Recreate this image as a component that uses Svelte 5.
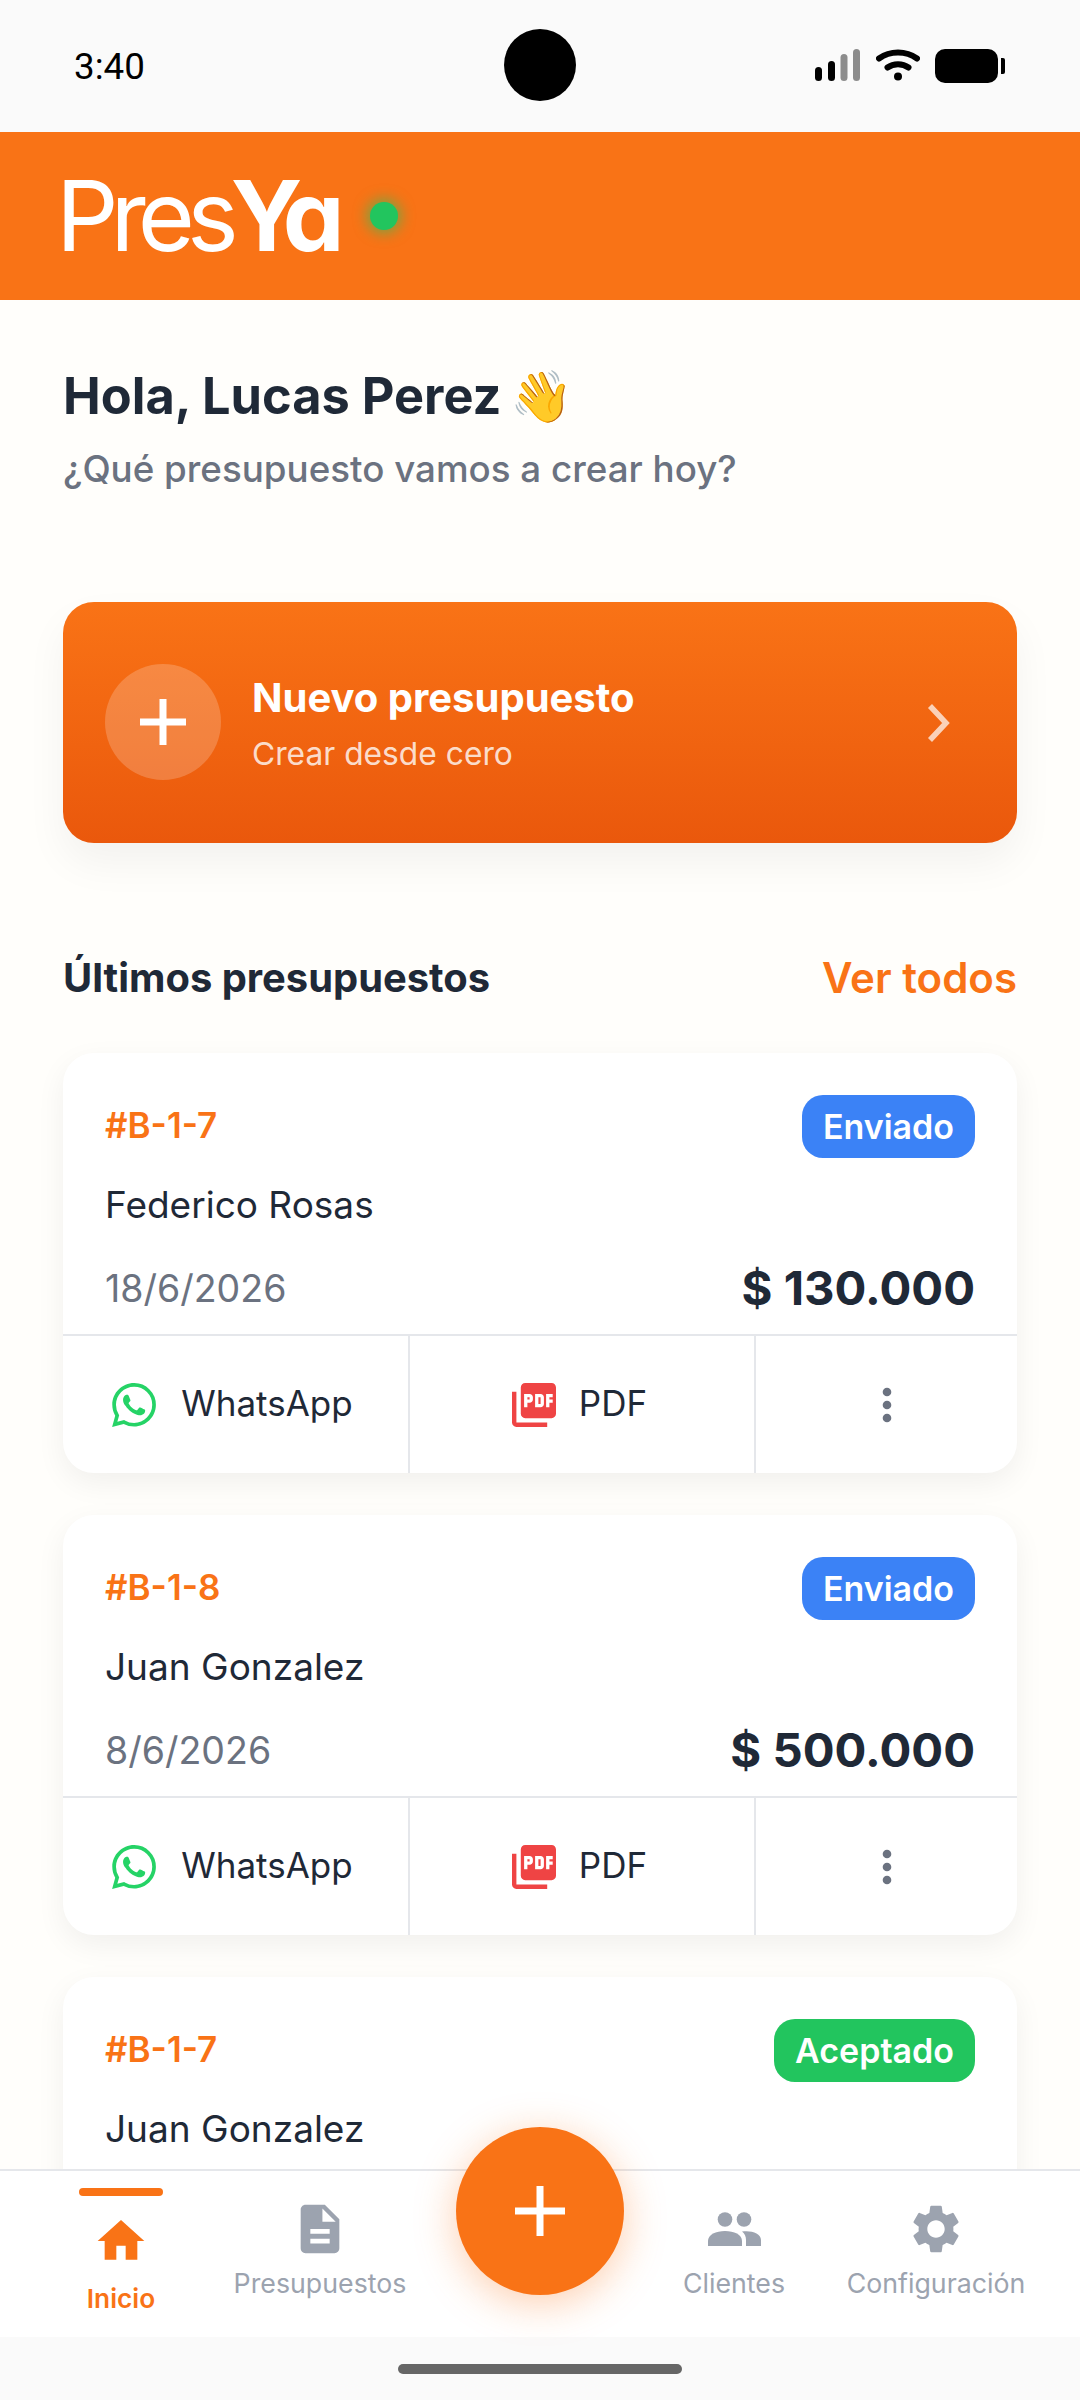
<script>
  const cards = [
    { id: '#B-1-7', status: 'Enviado', cls: 'blue', name: 'Federico Rosas', date: '18/6/2026', price: '$ 130.000' },
    { id: '#B-1-8', status: 'Enviado', cls: 'blue', name: 'Juan Gonzalez', date: '8/6/2026', price: '$ 500.000' },
    { id: '#B-1-7', status: 'Aceptado', cls: 'green', name: 'Juan Gonzalez', date: '5/6/2026', price: '$ 320.000' }
  ];
</script>

<div class="screen">
  <div class="status">
    <span class="time">3:40</span>
    <span class="camera"></span>
    <div class="sysicons">
      <svg class="signal" width="46" height="34" viewBox="0 0 46 34">
        <rect x="0" y="18" width="7" height="14" rx="3.5" fill="#000" />
        <rect x="13" y="12" width="7" height="20" rx="3.5" fill="#000" />
        <rect x="25.500" y="5" width="7" height="27" rx="3.500" fill="#8c8c8c" />
        <rect x="38" y="0" width="7" height="32" rx="3.500" fill="#8c8c8c" />
      </svg>
      <svg class="wifi" width="44" height="34" viewBox="0 0 44 34" fill="none" stroke="#000" stroke-linecap="round">
        <path d="M3 9.500C14 1.500 30 1.500 41 9.500" stroke-width="6" />
        <path d="M11.500 18.500C17.500 14 26.500 14 32.500 18.500" stroke-width="6" />
        <circle cx="22" cy="27.500" r="4" fill="#000" stroke="none" />
      </svg>
      <div class="battery"><span class="cell"></span><span class="nub"></span></div>
    </div>
  </div>

  <header class="brand">
    <div class="logo"><span class="pres">Pres</span><span class="ya">Ya</span></div>
    <span class="dot"></span>
  </header>

  <main class="content">
    <h1>Hola, Lucas Perez <span class="wave">👋</span></h1>
    <p class="sub">¿Qué presupuesto vamos a crear hoy?</p>

    <div class="cta">
      <div class="cta-circle">
        <svg width="46" height="46" viewBox="0 0 46 46"><path d="M23 0v46M0 23h46" stroke="#fff" stroke-width="7" /></svg>
      </div>
      <div class="cta-text">
        <div class="cta-title">Nuevo presupuesto</div>
        <div class="cta-sub">Crear desde cero</div>
      </div>
      <svg class="chev" width="24" height="40" viewBox="0 0 24 40" fill="none"><path d="M3 3l16 17L3 37" stroke="#fff" stroke-width="5.500" /></svg>
    </div>

    <div class="section">
      <h2>Últimos presupuestos</h2>
      <span class="all">Ver todos</span>
    </div>

    {#each cards as c}
      <article class="card">
        <div class="card-body">
          <div class="row top">
            <span class="id">{c.id}</span>
            <span class="badge {c.cls}">{c.status}</span>
          </div>
          <div class="name">{c.name}</div>
          <div class="row bottom">
            <span class="date">{c.date}</span>
            <span class="price">{c.price}</span>
          </div>
        </div>
        <div class="actions">
          <div class="action wa">
            <svg width="44" height="44" viewBox="0 0 24 24" fill="#25d366"><path d="M17.472 14.382c-.297-.149-1.758-.867-2.03-.967-.273-.099-.471-.148-.67.15-.197.297-.767.966-.94 1.164-.173.199-.347.223-.644.075-.297-.15-1.255-.463-2.39-1.475-.883-.788-1.48-1.761-1.653-2.059-.173-.297-.018-.458.13-.606.134-.133.298-.347.446-.52.149-.174.198-.298.298-.497.099-.198.05-.371-.025-.52-.075-.149-.669-1.612-.916-2.207-.242-.579-.487-.5-.669-.51-.173-.008-.371-.01-.57-.01-.198 0-.52.074-.792.372-.272.297-1.04 1.016-1.04 2.479 0 1.462 1.065 2.875 1.213 3.074.149.198 2.096 3.2 5.077 4.487.709.306 1.262.489 1.694.625.712.227 1.36.195 1.871.118.571-.085 1.758-.719 2.006-1.413.248-.694.248-1.289.173-1.413-.074-.124-.272-.198-.57-.347m-5.421 7.403h-.004a9.87 9.87 0 01-5.031-1.378l-.361-.214-3.741.982.998-3.648-.235-.374a9.86 9.86 0 01-1.51-5.26c.001-5.45 4.436-9.884 9.888-9.884 2.64 0 5.122 1.03 6.988 2.898a9.825 9.825 0 012.893 6.994c-.003 5.45-4.437 9.884-9.885 9.884m8.413-18.297A11.815 11.815 0 0012.05 0C5.495 0 .16 5.335.157 11.892c0 2.096.547 4.142 1.588 5.945L.057 24l6.305-1.654a11.882 11.882 0 005.683 1.448h.005c6.554 0 11.89-5.335 11.893-11.893a11.821 11.821 0 00-3.48-8.413z"/></svg>
            <span class="act-label">WhatsApp</span>
          </div>
          <div class="action pdf">
            <svg width="44" height="44" viewBox="2 2 20 20" fill="#ef4444"><path d="M20 2H8c-1.100 0-2 .9-2 2v12c0 1.100.9 2 2 2h12c1.100 0 2-.9 2-2V4c0-1.100-.9-2-2-2zm-8.500 7.500c0 .83-.67 1.500-1.500 1.500H9v2H7.500V7H10c.83 0 1.500.67 1.500 1.500v1zm5 2c0 .83-.67 1.500-1.500 1.500h-2.500V7H15c.83 0 1.500.67 1.500 1.500v3zm4-3H19v1h1.500V11H19v2h-1.500V7h3v1.500zM9 9.500h1v-1H9v1zM4 6H2v14c0 1.100.9 2 2 2h14v-2H4V6zm10 5.500h1v-3h-1v3z"/></svg>
            <span class="act-label">PDF</span>
          </div>
          <div class="action more">
            <svg width="10" height="36" viewBox="0 0 10 36" fill="#6b7280"><circle cx="5" cy="5" r="4.300"/><circle cx="5" cy="18" r="4.300"/><circle cx="5" cy="31" r="4.300"/></svg>
          </div>
        </div>
      </article>
    {/each}
  </main>

  <nav class="nav">
    <div class="tab active">
      <span class="bar"></span>
      <svg width="56" height="56" viewBox="0 0 24 24" fill="#f97316"><path d="M10 20v-6h4v6h5v-8h3L12 3 2 12h3v8z"/></svg>
      <span class="label">Inicio</span>
    </div>
    <div class="tab">
      <svg width="58" height="58" viewBox="0 0 24 24" fill="#9ca3af"><path d="M14 2H6c-1.100 0-1.990.9-1.990 2L4 20c0 1.100.89 2 1.990 2H18c1.100 0 2-.9 2-2V8l-6-6zm2 16H8v-2h8v2zm0-4H8v-2h8v2zm-3-5V3.500L18.500 9H13z"/></svg>
      <span class="label">Presupuestos</span>
    </div>
    <div class="gap"></div>
    <div class="tab">
      <svg class="people" width="53" height="34" viewBox="0 0 53 34" fill="#9ca3af"><circle cx="17" cy="7.500" r="7.300"/><circle cx="36" cy="7.500" r="7.300"/><path d="M0 34v-5c0-6.500 8-10 17-10s17 3.500 17 10v5H0z"/><path d="M38 34v-6c0-3.200-1.200-6.200-4-8.400 9-1.400 19 1.600 19 8.400v6H38z"/></svg>
      <span class="label">Clientes</span>
    </div>
    <div class="tab">
      <svg width="58" height="58" viewBox="0 0 24 24" fill="#9ca3af"><path d="M19.140 12.940c.04-.3.06-.61.06-.94 0-.32-.02-.64-.07-.94l2.030-1.580a.49.49 0 0 0 .12-.61l-1.920-3.320a.488.488 0 0 0-.59-.22l-2.390.96c-.5-.38-1.030-.7-1.620-.94l-.36-2.540a.484.484 0 0 0-.48-.41h-3.840c-.24 0-.43.17-.47.41l-.36 2.540c-.59.24-1.130.57-1.620.94l-2.390-.96c-.22-.08-.47 0-.59.22L2.740 8.870c-.12.21-.08.47.12.61l2.030 1.580c-.05.3-.09.63-.09.94s.02.64.07.94l-2.030 1.580a.49.49 0 0 0-.12.61l1.920 3.320c.12.22.37.29.59.22l2.390-.96c.5.38 1.030.7 1.620.94l.36 2.540c.05.24.24.41.48.41h3.840c.24 0 .44-.17.47-.41l.36-2.540c.59-.24 1.130-.56 1.620-.94l2.390.96c.22.08.47 0 .59-.22l1.920-3.320c.12-.22.07-.47-.12-.61l-2.010-1.580zM12 15.600c-1.980 0-3.600-1.620-3.600-3.600s1.620-3.600 3.600-3.600 3.600 1.620 3.600 3.600-1.620 3.600-3.600 3.600z"/></svg>
      <span class="label">Configuración</span>
    </div>
    <button class="fab" aria-label="Nuevo">
      <svg width="50" height="50" viewBox="0 0 50 50"><path d="M25 0v50M0 25h50" stroke="#fff" stroke-width="7" /></svg>
    </button>
  </nav>

  <div class="home"><span></span></div>
</div>

<style>
  :global(body) { margin: 0; background: #fffefb; }
  * { box-sizing: border-box; }
  .screen {
    width: 1080px; height: 2400px; display: flex; flex-direction: column; overflow: hidden;
    font-family: Inter, "Noto Sans", sans-serif; color: #1f2937; background: #fffefb;
  }
  .status {
    position: relative; height: 132px; flex: none; background: #fafafa;
    display: flex; align-items: center; justify-content: space-between; padding: 0 75px 0 74px;
  }
  .time { font-family: Roboto, sans-serif; font-size: 36.75px; color: #000; }
  .camera { position: absolute; left: 504px; top: 29px; width: 72px; height: 72px; border-radius: 50%; background: #000; }
  .sysicons { display: flex; align-items: center; }
  .signal { margin-right: 15px; }
  .wifi { margin-right: 15px; }
  .battery { display: flex; align-items: center; }
  .cell { width: 63px; height: 34px; border-radius: 10px; background: #000; }
  .nub { width: 4px; height: 16px; margin-left: 3px; background: #000; border-radius: 0 2px 2px 0; }

  .brand {
    height: 168px; flex: none; background: #f97316; display: flex; align-items: center; padding-left: 56px; gap: 35px;
  }
  .logo { font-size: 98px; line-height: 1; color: #fff; font-feature-settings: "cv11"; display: flex; }
  .pres { font-weight: 400; letter-spacing: -8px; }
  .ya { font-weight: 700; letter-spacing: -9px; }
  .dot { width: 28px; height: 28px; border-radius: 50%; background: #22c55e; box-shadow: 0 0 14px 3px rgba(34,197,94,.6); }

  .content { flex: 1; min-height: 0; overflow: hidden; padding: 0 63px; }
  h1 { margin: 66px 0 0; font-size: 50.5px; line-height: 60px; font-weight: 700; color: #1f2937; }
  .wave { margin-left: -3px; }
  .sub { margin: 20px 0 0; font-size: 36.75px; line-height: 46px; font-weight: 500; color: #6b7280; }

  .cta {
    margin-top: 110px; height: 241px; border-radius: 31px; padding: 0 66px 0 42px;
    background: linear-gradient(180deg, #f97316, #ea580c);
    display: flex; align-items: center; box-shadow: 0 20px 42px rgba(0,0,0,.05);
  }
  .cta-circle {
    width: 116px; height: 116px; border-radius: 50%; background: rgba(255,255,255,.2);
    display: flex; align-items: center; justify-content: center; margin-top: -2px;
  }
  .cta-text { flex: 1; margin-left: 31px; padding-top: 3px; }
  .cta-title { font-size: 40px; line-height: 52px; font-weight: 700; color: #fff; }
  .cta-sub { font-size: 31.75px; line-height: 44px; margin-top: 8px; color: rgba(255,255,255,.8); }
  .chev { opacity: .7; }

  .section { margin-top: 110px; display: flex; justify-content: space-between; align-items: center; height: 48px; }
  h2 { margin: 0; font-size: 39.9px; font-weight: 700; color: #1f2937; }
  .all { font-size: 42px; font-weight: 600; color: #f97316; }

  .card {
    margin-top: 42px; background: #fff; border-radius: 31px;
    box-shadow: 0 10px 30px rgba(0,0,0,.06);
  }
  .section + .card { margin-top: 52px; }
  .card-body { padding: 42px 42px 0; height: 283px; border-bottom: 2px solid #e5e7eb; }
  .row { display: flex; justify-content: space-between; align-items: center; }
  .top { height: 63px; }
  .id { font-size: 35px; font-weight: 600; color: #f97316; margin-bottom: 3px; }
  .badge { height: 63px; padding: 0 21px; border-radius: 21px; color: #fff; font-size: 34px; font-weight: 600; display: flex; align-items: center; }
  .blue { background: #3b82f6; }
  .green { background: #22c55e; }
  .name { margin-top: 24px; font-size: 37px; line-height: 46px; color: #1f2937; }
  .bottom { margin-top: 30px; height: 60px; }
  .date { font-size: 37.5px; color: #6b7280; }
  .price { font-size: 47.25px; font-weight: 700; color: #1f2937; margin-bottom: 2px; }
  .actions { display: flex; height: 137px; }
  .action { display: flex; align-items: center; justify-content: center; font-size: 35px; color: #1f2937; }
  .act-label { padding-bottom: 3px; }
  .wa { width: 347px; border-right: 2px solid #e5e7eb; gap: 25px; padding-right: 6px; }
  .pdf { width: 346px; border-right: 2px solid #e5e7eb; gap: 23px; padding-right: 5px; }
  .more { flex: 1; }

  .nav {
    position: relative; height: 168px; flex: none; background: #fff; border-top: 2px solid #e5e7eb;
    display: grid; grid-template-columns: 172px 226px 201px 200px 204px; padding: 0 42px 0 35px;
  }
  .gap { min-width: 0; }
  .tab { position: relative; display: flex; flex-direction: column; align-items: center; padding-top: 29px; font-size: 26.75px; color: #9ca3af; }
  .tab .label { margin-top: 8px; line-height: 34px; font-weight: 400; white-space: nowrap; }
  .people { margin: 12px 0; }
  .tab.active { color: #f97316; padding-top: 42px; }
  .tab.active .label { font-size: 26.25px; font-weight: 600; margin-top: 13px; }
  .bar { position: absolute; left: 44px; top: 17px; width: 84px; height: 8px; border-radius: 4px; background: #f97316; }
  .fab {
    position: absolute; left: 456px; top: -44px; width: 168px; height: 168px; border: 0; border-radius: 50%; padding: 0;
    background: #f97316; display: flex; align-items: center; justify-content: center;
    box-shadow: 0 8px 40px rgba(249,115,22,.35);
  }
  .home { height: 63px; flex: none; background: #fafafa; display: flex; justify-content: center; padding-top: 27px; }
  .home span { width: 284px; height: 10px; border-radius: 5px; background: #666; }
</style>
